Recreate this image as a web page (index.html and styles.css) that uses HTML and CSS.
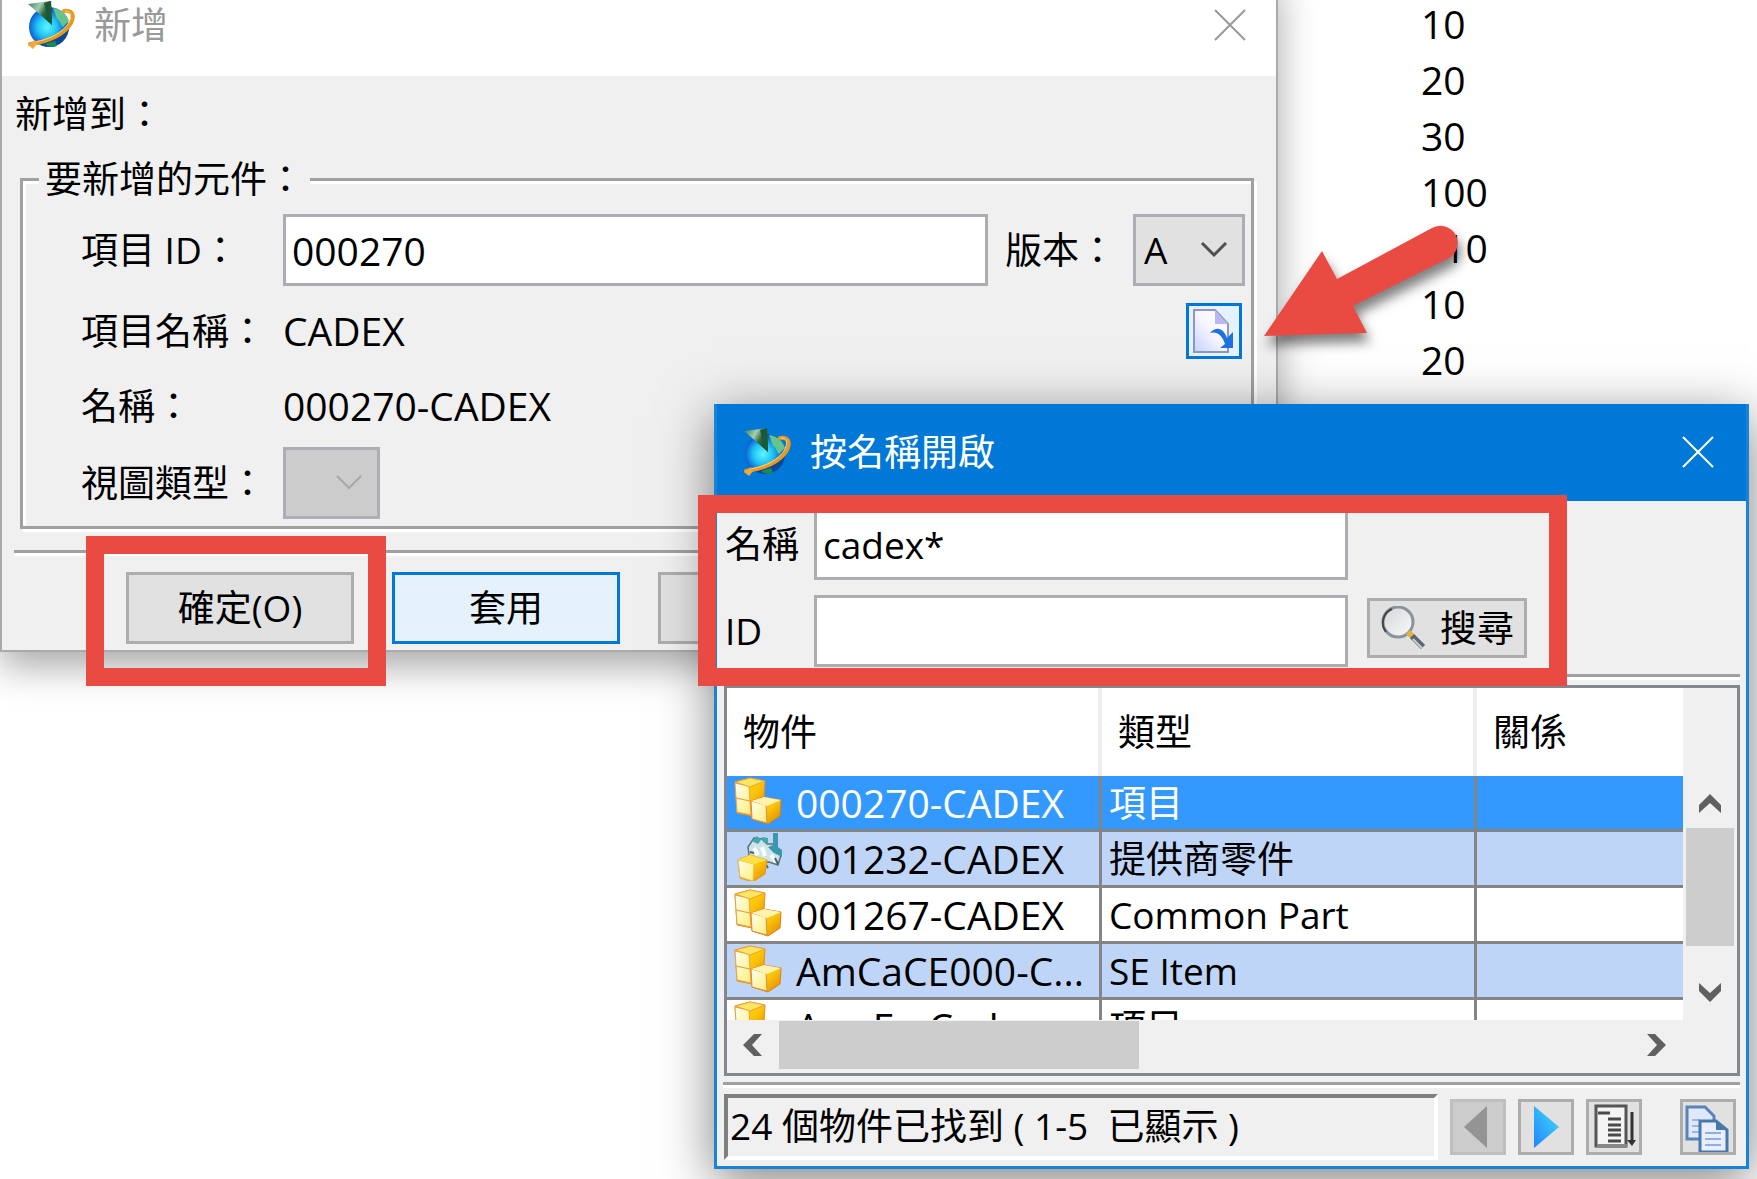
FILE: index.html
```html
<!DOCTYPE html>
<html lang="zh-Hant">
<head>
    <meta charset="UTF-8">
    <meta name="viewport" content="width=device-width, initial-scale=1.0">
    <title>新增</title>
    <link rel="stylesheet" href="styles.css">
</head>
<body>
    <!-- Shared icons -->
    <svg class="defs" aria-hidden="true">
        <defs>
            <radialGradient id="globeFill" cx="45%" cy="50%" r="55%">
                <stop offset="0" stop-color="#5ff6ff"/>
                <stop offset=".45" stop-color="#1fc4f5"/>
                <stop offset=".8" stop-color="#0f63d8"/>
                <stop offset="1" stop-color="#0a3c9c"/>
            </radialGradient>
            <linearGradient id="greenFill" x1="0" y1="0" x2="1" y2=".6">
                <stop offset="0" stop-color="#2f7a4c"/>
                <stop offset=".45" stop-color="#a5ccb2"/>
                <stop offset=".7" stop-color="#2c6b42"/>
                <stop offset="1" stop-color="#12482a"/>
            </linearGradient>
            <linearGradient id="boxSide" x1="0" y1="0" x2="1" y2="1">
                <stop offset="0" stop-color="#ffe600"/>
                <stop offset=".5" stop-color="#fcc60a"/>
                <stop offset="1" stop-color="#dd8500"/>
            </linearGradient>
            <linearGradient id="boxFront" x1="0" y1="0" x2="1" y2="1">
                <stop offset="0" stop-color="#fffef0"/>
                <stop offset="1" stop-color="#fff07a"/>
            </linearGradient>
            <linearGradient id="pageFill" x1="1" y1="0" x2="0" y2="1">
                <stop offset="0" stop-color="#ffffff"/>
                <stop offset=".5" stop-color="#f8f5ff"/>
                <stop offset="1" stop-color="#c3d3fb"/>
            </linearGradient>
            <linearGradient id="nextFill" x1="0" y1="1" x2="1" y2="0">
                <stop offset="0" stop-color="#1e86f5"/>
                <stop offset="1" stop-color="#46dcff"/>
            </linearGradient>
            <linearGradient id="lensFill" x1="0" y1="0" x2="1" y2="1">
                <stop offset="0" stop-color="#d4d6d8"/>
                <stop offset="1" stop-color="#fafafa"/>
            </linearGradient>
        </defs>

        <symbol id="icon-globe" viewBox="0 0 50 50">
            <circle cx="23" cy="27" r="20" fill="url(#globeFill)"/>
            <path d="M27 8c8 1 14 6 16 13l-6 6c-3-3-2-6-6-8z" fill="#63c58d"/>
            <path d="M12 43c6 5 18 5 25-3 3-3 5-8 6-12-6 8-19 14-31 15z" fill="#0b4a91"/>
            <path d="M19 44c3 3 9 4 12 2l-2-5z" fill="#1c8a56"/>
            <path d="M38 11c8-1 11 4 7 12C39 34 22 42 4 44" fill="none" stroke="#e79a22" stroke-width="4" stroke-linecap="round"/>
            <path d="M39 11c6 0 7 4 4 11C37 33 24 39 9 42" fill="none" stroke="#ffd68b" stroke-width="1"/>
            <path d="M2 45l7-5 2 4-4 5z" fill="#f2a93a"/>
            <path d="M2 4l23-3 1 24z" fill="url(#greenFill)"/>
            <path d="M18 3l7-2 1 24-4-5z" fill="#1c5935"/>
        </symbol>

        <symbol id="icon-boxes" viewBox="0 0 48 48">
            <path d="M1 5L16 1l15 3-1 17-12 18-15-3z" fill="url(#boxSide)" stroke="#e58a2a"/>
            <path d="M1 6l14 3 2 29-14-3z" fill="url(#boxFront)" stroke="#eda04a"/>
            <path d="M1 5L16 1l15 3-15 6z" fill="#ffe566" stroke="#f0a030"/>
            <path d="M2 21l14 3" stroke="#e8923c"/>
            <path d="M17 24l13-4 17 3-1 16-12 8-16-5z" fill="url(#boxSide)" stroke="#db7d1a"/>
            <path d="M17 24l15 4 1 18-15-4z" fill="url(#boxFront)" stroke="#e58a3a"/>
            <path d="M17 24l13-4 17 3-14 6z" fill="#fff3b0"/>
        </symbol>

        <symbol id="icon-vendor" viewBox="0 0 48 48">
            <path d="M14 14l6-9 8 1 5 5h8l6 11-3 10-9-3-6 1-8-4-5 3z" fill="#cfe4ea" stroke="#57727e" stroke-width="1.5"/>
            <path d="M39 0h5v14l4 3v7l-8-4-6-6 5-2z" fill="#3a98ae"/>
            <path d="M18 8l5-5 4 4-3 4zM28 4l6 1v6l-5-2z" fill="#3fa9ae"/>
            <path d="M20 15l4 7M28 14l3 9M37 22l5 7" stroke="#f8ffff" stroke-width="4"/>
            <path d="M31 30l3 5M41 25l3 6M16 19l4 1" stroke="#4a5f6b" stroke-width="2"/>
            <path d="M4 27l12-5 17 5-2 14-12 8-13-4z" fill="url(#boxSide)" stroke="#d9982a"/>
            <path d="M4 27l16 4-1 17-13-4z" fill="url(#boxFront)" stroke="#ecbb4a"/>
            <path d="M4 27l12-5 17 5-13 4z" fill="#ffdf45"/>
        </symbol>

        <symbol id="icon-close" viewBox="0 0 32 32">
            <path d="M1 1l30 30M31 1L1 31" fill="none" stroke="currentColor" stroke-width="2"/>
        </symbol>

        <symbol id="icon-chevron" viewBox="0 0 24 20">
            <path d="M1 19v-8L12 0l11 11v8L12 9z" fill="#606060"/>
        </symbol>
    </svg>

    <main class="desktop">
        <ul class="find-numbers">
            <li>10</li>
            <li>20</li>
            <li>30</li>
            <li>100</li>
            <li>110</li>
            <li>10</li>
            <li>20</li>
        </ul>

        <!-- Add component dialog -->
        <form class="window add-window">
            <header class="title-bar">
                <svg class="app-icon"><use href="#icon-globe"/></svg>
                <h1>新增</h1>
                <button type="button" class="close" aria-label="關閉"><svg><use href="#icon-close"/></svg></button>
            </header>
            <p class="add-to">新增到：</p>
            <fieldset class="component">
                <legend>要新增的元件：</legend>
                <div class="row">
                    <label class="row-label" for="itemId">項目 ID：</label>
                    <input class="text-box" id="itemId" type="text" value="000270">
                    <label class="revision-label" for="revision">版本：</label>
                    <select class="combo" id="revision">
                        <option>A</option>
                    </select>
                </div>
                <div class="row">
                    <span class="row-label">項目名稱：</span>
                    <span class="value">CADEX</span>
                    <button type="button" class="open-by-name" aria-label="按名稱開啟">
                        <svg viewBox="0 0 46 46">
                            <path d="M3 2h21l13 14v28H3z" fill="url(#pageFill)" stroke="#8f97bd" stroke-width="2"/>
                            <path d="M24 2v14h13z" fill="#b9b8f3"/>
                            <path d="M19 25c7-8 14-4 17 5l6-6v16H29l5-4c-3-9-8-13-15-11z" fill="#1b74dc"/>
                        </svg>
                    </button>
                </div>
                <div class="row">
                    <span class="row-label">名稱：</span>
                    <span class="value">000270-CADEX</span>
                </div>
                <div class="row">
                    <label class="row-label" for="viewType">視圖類型：</label>
                    <select class="combo view-type" id="viewType" disabled></select>
                </div>
            </fieldset>
            <hr class="etched">
            <div class="buttons">
                <button type="button" class="push">確定(O)</button>
                <button type="button" class="push default">套用</button>
                <button type="button" class="push" aria-label="取消"></button>
            </div>
        </form>

        <!-- Open by name dialog -->
        <form class="window open-window">
            <header class="title-bar active">
                <svg class="app-icon"><use href="#icon-globe"/></svg>
                <h2>按名稱開啟</h2>
                <button type="button" class="close" aria-label="關閉"><svg><use href="#icon-close"/></svg></button>
            </header>
            <div class="criteria">
                <label for="findName">名稱</label>
                <input class="text-box" id="findName" type="text" value="cadex*">
                <label for="findId">ID</label>
                <input class="text-box" id="findId" type="text">
                <button type="button" class="push search">
                    <svg viewBox="0 0 46 44">
                        <circle cx="18" cy="16" r="15" fill="url(#lensFill)" stroke="#8a929c" stroke-width="3"/>
                        <path d="M6 26A15 15 0 0 1 12 3" fill="none" stroke="#444" stroke-width="2"/>
                        <path d="M28 26l6 6" stroke="#e3b33b" stroke-width="6"/>
                        <path d="M32 30l11 11" stroke="#5c6672" stroke-width="6"/>
                        <path d="M33 33l9 9" stroke="#c9ced4" stroke-width="2"/>
                    </svg>
                    搜尋
                </button>
            </div>
            <hr class="etched">
            <div class="results">
                <div class="results-body">
                    <table>
                        <thead>
                            <tr>
                                <th class="col-object">物件</th>
                                <th class="col-type">類型</th>
                                <th>關係</th>
                            </tr>
                        </thead>
                        <tbody>
                            <tr class="selected">
                                <td class="object"><svg><use href="#icon-boxes"/></svg>000270-CADEX</td>
                                <td>項目</td>
                                <td></td>
                            </tr>
                            <tr>
                                <td class="object"><svg><use href="#icon-vendor"/></svg>001232-CADEX</td>
                                <td>提供商零件</td>
                                <td></td>
                            </tr>
                            <tr>
                                <td class="object"><svg><use href="#icon-boxes"/></svg>001267-CADEX</td>
                                <td>Common Part</td>
                                <td></td>
                            </tr>
                            <tr>
                                <td class="object"><svg><use href="#icon-boxes"/></svg>AmCaCE000-C...</td>
                                <td>SE Item</td>
                                <td></td>
                            </tr>
                            <tr>
                                <td class="object"><svg><use href="#icon-boxes"/></svg>AmrEn Cadex</td>
                                <td>項目</td>
                                <td></td>
                            </tr>
                        </tbody>
                    </table>
                </div>
                <div class="scroll-v">
                    <svg class="chevron"><use href="#icon-chevron"/></svg>
                    <div class="thumb"></div>
                    <svg class="chevron down"><use href="#icon-chevron"/></svg>
                </div>
                <div class="scroll-h">
                    <svg class="chevron left"><use href="#icon-chevron"/></svg>
                    <div class="thumb"></div>
                    <svg class="chevron right"><use href="#icon-chevron"/></svg>
                </div>
            </div>
            <hr class="etched">
            <footer class="status-bar">
                <output class="status">24 個物件已找到 ( 1-5&nbsp; 已顯示 )</output>
                <button type="button" class="tool" aria-label="上一頁" disabled>
                    <svg viewBox="0 0 50 50"><path d="M34 4v42L11 25z" fill="#949494"/></svg>
                </button>
                <button type="button" class="tool" aria-label="下一頁">
                    <svg viewBox="0 0 50 50"><path d="M13 4v42l25-21z" fill="url(#nextFill)"/></svg>
                </button>
                <button type="button" class="tool" aria-label="全部載入">
                    <svg viewBox="0 0 50 50">
                        <path d="M7 4h30v40H7z" fill="#f4f4f4" stroke="#555" stroke-width="3"/>
                        <path d="M8 44h30" stroke="#888" stroke-width="4"/>
                        <path d="M9 11h12M19 17h13M19 23h13M19 28h13M19 33h13M19 39h13" stroke="#4a4a4a" stroke-width="3"/>
                        <path d="M43 10v28" stroke="#333" stroke-width="3"/>
                        <path d="M38 38h9l-4 6z" fill="#333"/>
                    </svg>
                </button>
                <button type="button" class="tool copy" aria-label="複製">
                    <svg viewBox="0 0 50 50">
                        <path d="M4 5h18l9 9v23H4z" fill="#dfe8ff" stroke="#5a84b8" stroke-width="3"/>
                        <path d="M9 18h8M9 24h8M9 30h8" stroke="#9db8e0" stroke-width="2"/>
                        <path d="M17 19h16l11 9v22H17z" fill="#e9edff" stroke="#4678a8" stroke-width="3"/>
                        <path d="M33 18v10h11z" fill="#4678a8"/>
                        <path d="M22 31h16M22 37h16M22 43h16" stroke="#8fb0dc" stroke-width="2"/>
                    </svg>
                </button>
            </footer>
        </form>

        <!-- Callouts -->
        <svg class="arrow" viewBox="0 0 200 140" aria-hidden="true">
            <path d="M4 106L62 21l15 28 95-51a17 17 0 0 1 17 30L93 76l14 27z" fill="#e94b43"/>
        </svg>
        <div class="callout callout-ok"></div>
        <div class="callout callout-criteria"></div>
    </main>
</body>
</html>
```

FILE: styles.css
```css
* {
    box-sizing: border-box;
}
body {
    margin: 0;
    background-color: #fff;
    color: #000;
    font-family: "Open Sans", "Noto Sans CJK TC", sans-serif;
    font-size: 37px;
    line-height: 56px;
}
button, input, select {
    margin: 0;
    padding: 0;
    color: inherit;
    font: inherit;
    border-radius: 0;
}
svg {
    display: block;
}
.defs {
    position: absolute;
    width: 0;
    height: 0;
}
.desktop {
    position: relative;
    min-height: 100vh;
    overflow: hidden;
}

/* number column behind the dialogs */
.find-numbers {
    width: 336px;
    margin: -4px 0 0 auto;
    padding: 0;
    list-style: none;
    font-size: 39px;
}

/* windows */
.window {
    position: absolute;
    background-color: #f0f0f0;
}
.add-window {
    top: -26px;
    left: 0;
    width: calc(100% - 479px);
    border: 2px solid #aaa;
    border-top: none;
    box-shadow: 0 14px 36px rgba(0, 0, 0, 0.35);
}
.open-window {
    top: 404px;
    left: 714px;
    right: 8px;
    border: 3px solid #1883d7;
    border-top: none;
    box-shadow: 0 12px 50px rgba(0, 0, 0, 0.5);
}
.title-bar {
    display: flex;
    align-items: center;
    height: 102px;
    padding: 0 30px 0 24px;
    background-color: #fff;
    color: #999;
}
.title-bar.active {
    height: 97px;
    padding: 0 32px 2px 25px;
    background-color: #0078d7;
    color: #fff;
}
.title-bar h1, .title-bar h2 {
    flex: 1;
    margin: 0 0 0 18px;
    font-size: 37px;
    font-weight: normal;
}
.app-icon {
    width: 50px;
    height: 50px;
}
.close {
    width: 32px;
    height: 32px;
    border: none;
    background: none;
}
.close svg {
    width: 32px;
    height: 32px;
}

/* controls */
.text-box {
    min-width: 0;
    height: 72px;
    padding: 0 6px;
    border: 3px solid #abadb3;
    background-color: #fff;
}
.combo {
    width: 112px;
    height: 72px;
    padding-left: 8px;
    border: 3px solid #adadb5;
    appearance: none;
    background: #e1e1e1 url("data:image/svg+xml,%3Csvg xmlns='http://www.w3.org/2000/svg' width='28' height='16'%3E%3Cpath d='M2 1l12 12L26 1' fill='none' stroke='%23505050' stroke-width='3'/%3E%3C/svg%3E") no-repeat right 14px center;
}
.combo:disabled {
    opacity: 1;
    background-color: #ccc;
    background-image: url("data:image/svg+xml,%3Csvg xmlns='http://www.w3.org/2000/svg' width='28' height='16'%3E%3Cpath d='M2 1l12 12L26 1' fill='none' stroke='%23a8a8a8' stroke-width='2'/%3E%3C/svg%3E");
}
.view-type {
    width: 97px;
}
.push {
    width: 228px;
    height: 72px;
    border: 3px solid #adadad;
    background-color: #e1e1e1;
}
.push.default {
    border-color: #0078d7;
    background-color: #e5f1fb;
}
.etched {
    height: 6px;
    margin: 0;
    border: none;
    border-top: 3px solid #a0a0a0;
    background-color: #fff;
}

/* add dialog */
.add-to {
    margin: 10px 0 0 13px;
}
.component {
    position: relative;
    margin: 9px 22px 0 18px;
    padding: 0 6px 3px 58px;
    border: 3px solid #a0a0a0;
    box-shadow: 3px 3px 0 #fff, inset 3px 3px 0 #fff;
}
.component legend {
    margin-left: -42px;
    padding: 0 6px;
    background-color: #f0f0f0;
}
.row {
    display: flex;
    align-items: center;
    height: 75px;
}
.row:first-of-type {
    height: 86px;
}
.row:last-of-type {
    height: 80px;
}
.row-label {
    width: 202px;
    white-space: nowrap;
}
.row .text-box {
    flex: 1;
}
.row .text-box, .row .value {
    font-size: 39px;
}
.revision-label {
    margin: 0 17px;
}
.open-by-name {
    width: 56px;
    height: 56px;
    margin: 0 3px 0 auto;
    padding: 2px;
    border: 3px solid #0078d7;
    background-color: #e5f1fb;
}
.add-window > .etched {
    margin: 21px 22px 0 12px;
}
.buttons {
    display: flex;
    gap: 38px;
    padding: 16px 0 6px 124px;
}

/* open by name dialog */
.criteria {
    display: grid;
    grid-template-columns: 89px 534px 160px;
    align-items: center;
    row-gap: 15px;
    padding: 7px 0 7px 8px;
}
.criteria label {
    grid-column: 1;
}
.search {
    display: flex;
    align-items: center;
    align-self: start;
    justify-content: space-between;
    width: 160px;
    height: 60px;
    margin: 3px 0 0 19px;
    padding: 0 10px;
}
.search svg {
    width: 46px;
    height: 44px;
}
.open-window > .etched {
    margin: 0 6px;
}
.results {
    display: grid;
    grid-template-columns: 1fr 54px;
    margin: 5px 6px 6px 7px;
    border: 3px solid #828790;
}
.results-body {
    height: 332px;
    overflow: hidden;
    background-color: #fff;
}
table {
    width: 100%;
    table-layout: fixed;
    border-spacing: 0;
}
th {
    height: 88px;
    padding: 0 0 0 16px;
    border-right: 4px solid #eee;
    font-weight: normal;
    text-align: left;
}
.col-object, .col-type {
    width: 375px;
}
td {
    height: 56px;
    padding: 0 0 0 7px;
    border-right: 3px solid #848484;
    border-bottom: 3px solid #848484;
    line-height: 53px;
    white-space: nowrap;
    overflow: hidden;
}
.object {
    font-size: 39px;
}
th:last-child, td:last-child {
    border-right: none;
}
td svg {
    float: left;
    width: 48px;
    height: 48px;
    margin: 1px 14px 0 0;
}
tbody tr:nth-child(even) {
    background-color: #bfd5f7;
}
tbody .selected {
    background-color: #3399ff;
    color: #fff;
}
.scroll-v {
    display: flex;
    flex-direction: column;
    align-items: center;
    gap: 14px;
    padding: 106px 3px 0;
}
.scroll-v .thumb {
    width: 48px;
    height: 118px;
    background-color: #cdcdcd;
}
.scroll-v .down {
    margin-top: 22px;
}
.scroll-h {
    display: flex;
    align-items: center;
    height: 53px;
    padding: 0 15px 4px 14px;
}
.scroll-h .thumb {
    width: 360px;
    height: 48px;
    margin: 0 auto 0 14px;
    background-color: #cdcdcd;
}
.chevron {
    width: 24px;
    height: 20px;
}
.down {
    transform: rotate(180deg);
}
.left {
    transform: rotate(-90deg);
}
.right {
    transform: rotate(90deg);
}
.status-bar {
    display: flex;
    align-items: center;
    gap: 12px;
    padding: 6px 10px 6px 7px;
}
.status {
    flex: 1;
    height: 66px;
    padding-left: 2px;
    border: 4px solid #fff;
    border-top-color: #808080;
    border-left-color: #808080;
    white-space: nowrap;
}
.tool {
    width: 56px;
    height: 56px;
    border: 3px solid #adadad;
    background-color: #e1e1e1;
}
.tool:disabled {
    border-color: #bfbfbf;
    background-color: #ccc;
}
.copy {
    margin-left: 26px;
}

/* callouts lie over both windows */
.arrow {
    position: absolute;
    top: 230px;
    left: 1260px;
    width: 200px;
    height: 140px;
    overflow: visible;
    filter: drop-shadow(3px 9px 6px rgba(0, 0, 0, 0.5));
}
.callout {
    position: absolute;
    border: 18px solid #e94b43;
    pointer-events: none;
}
.callout-ok {
    top: 536px;
    left: 86px;
    width: 300px;
    height: 150px;
}
.callout-criteria {
    top: 495px;
    left: 698px;
    width: 869px;
    height: 191px;
}
```
